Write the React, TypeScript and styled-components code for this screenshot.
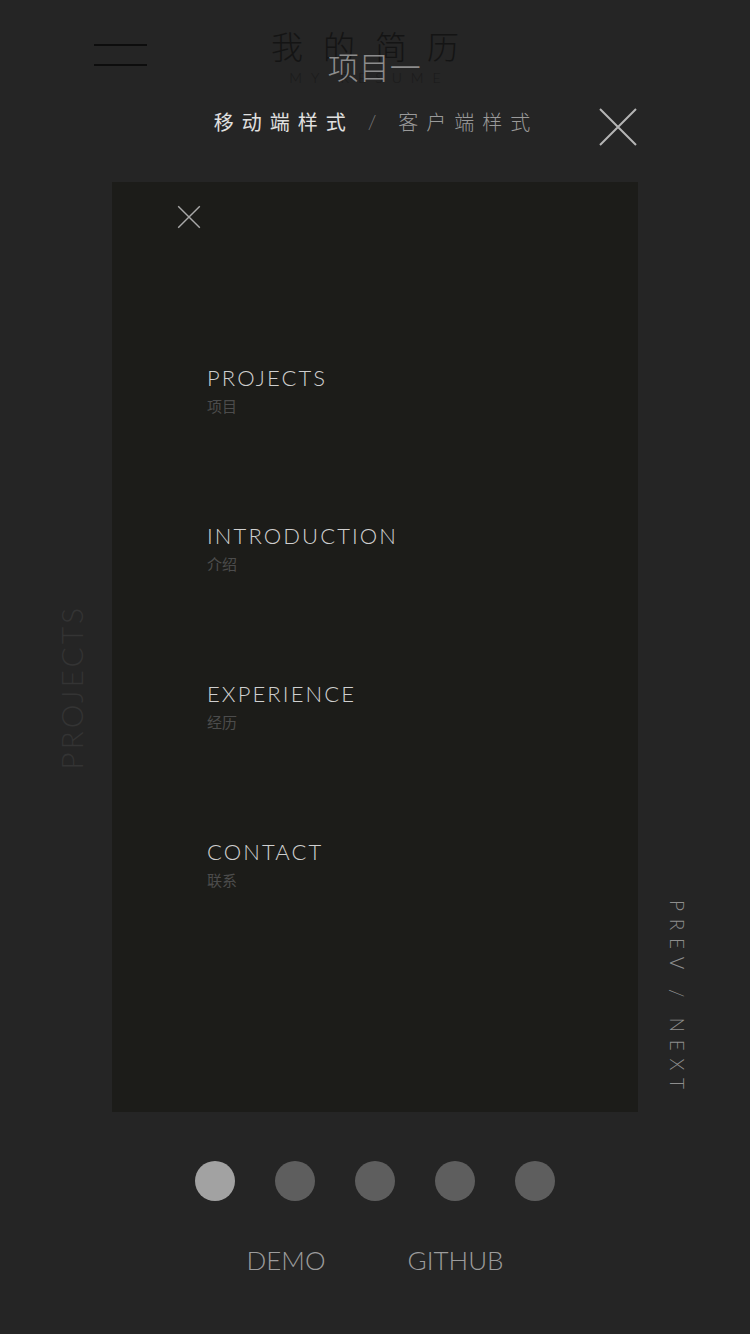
import React from 'react';
import styled, { createGlobalStyle } from 'styled-components';

const GlobalStyle = createGlobalStyle`
    html, body {
        margin: 0;
        padding: 0;
        background: #252525;
    }
    * {
        box-sizing: border-box;
    }
`;

const menuItems = [
    { en: 'PROJECTS', zh: '项目' },
    { en: 'INTRODUCTION', zh: '介绍' },
    { en: 'EXPERIENCE', zh: '经历' },
    { en: 'CONTACT', zh: '联系' },
];

const dots = [true, false, false, false, false];

function CrossIcon({ size, color, width }: { size: number; color: string; width: number }) {
    return (
        <svg width={size} height={size} viewBox="0 0 40 40">
            <path d="M2 2 L38 38 M38 2 L2 38" stroke={color} strokeWidth={width} fill="none" />
        </svg>
    );
}

function App() {
    return (
        <Page>
            <GlobalStyle />
            <Header>
                <Hamburger>
                    <span />
                    <span />
                </Hamburger>
                <TitleBlock>
                    <Title>我的简历</Title>
                    <SubTitle>MY RESUME</SubTitle>
                    <ProjectName>项目一</ProjectName>
                </TitleBlock>
            </Header>

            <Switcher>
                <SwitchText active>移动端样式</SwitchText>
                <Slash>/</Slash>
                <SwitchText>客户端样式</SwitchText>
                <CloseButton>
                    <CrossIcon size={40} color="#b5b5b5" width={2} />
                </CloseButton>
            </Switcher>

            <Stage>
                <SideLabel>PROJECTS</SideLabel>
                <Panel>
                    <SmallClose>
                        <CrossIcon size={24} color="#a8a8a8" width={2.4} />
                    </SmallClose>
                    <Menu>
                        {menuItems.map(item => (
                            <MenuItem key={item.en}>
                                <MenuEn>{item.en}</MenuEn>
                                <MenuZh>{item.zh}</MenuZh>
                            </MenuItem>
                        ))}
                    </Menu>
                </Panel>
                <PrevNext>PREV / NEXT</PrevNext>
            </Stage>

            <Dots>
                {dots.map((on, i) => (
                    <Dot key={i} active={on} />
                ))}
            </Dots>

            <Links>
                <LinkText>DEMO</LinkText>
                <LinkText>GITHUB</LinkText>
            </Links>
        </Page>
    );
}

const Page = styled.div`
    width: 750px;
    height: 1334px;
    background: #252525;
    overflow: hidden;
    font-family: Lato, "Open Sans", "Noto Sans CJK SC", sans-serif;
`;

const Header = styled.div`
    position: relative;
    height: 100px;
    display: flex;
    justify-content: center;
    padding-top: 26px;
`;

const Hamburger = styled.div`
    position: absolute;
    left: 94px;
    top: 44px;
    width: 53px;
    display: flex;
    flex-direction: column;
    gap: 18px;

    span {
        display: block;
        height: 2px;
        background: #0d0d0d;
    }
`;

const TitleBlock = styled.div`
    position: relative;
    display: flex;
    flex-direction: column;
    align-items: center;
    margin-left: -20px;
`;

const Title = styled.div`
    font-family: "Noto Sans CJK SC", sans-serif;
    font-weight: 300;
    font-size: 32px;
    line-height: 38px;
    letter-spacing: 20px;
    margin-right: -20px;
    color: #141414;
`;

const SubTitle = styled.div`
    font-family: Lato, sans-serif;
    font-weight: 300;
    font-size: 14px;
    line-height: 16px;
    letter-spacing: 9px;
    margin-right: -9px;
    margin-top: 6px;
    color: #1a1a1a;
`;

const ProjectName = styled.div`
    position: absolute;
    top: 22px;
    left: 50%;
    transform: translateX(-40%);
    white-space: nowrap;
    font-family: "Noto Sans CJK SC", sans-serif;
    font-weight: 300;
    font-size: 31px;
    line-height: 36px;
    color: #8c8c8c;
`;

const Switcher = styled.div`
    position: relative;
    height: 42px;
    display: flex;
    justify-content: center;
    align-items: center;
    padding-left: 2px;
`;

const SwitchText = styled.span<{ active?: boolean }>`
    font-family: "Noto Sans CJK SC", sans-serif;
    font-weight: ${p => (p.active ? 400 : 300)};
    font-size: 20px;
    letter-spacing: 8px;
    color: ${p => (p.active ? '#e0e0e0' : '#9a9a9a')};
`;

const Slash = styled.span`
    font-family: Lato, sans-serif;
    font-weight: 300;
    font-size: 20px;
    color: #777;
    margin: 0 22px 0 14px;
`;

const CloseButton = styled.div`
    position: absolute;
    right: 112px;
    top: 7px;
    width: 40px;
    height: 40px;
`;

const Stage = styled.div`
    display: grid;
    grid-template-columns: 112px 526px 112px;
    margin-top: 40px;
`;

const SideLabel = styled.div`
    writing-mode: vertical-rl;
    transform: rotate(180deg);
    justify-self: end;
    margin-right: 23px;
    margin-top: 423px;
    align-self: start;
    font-family: Lato, sans-serif;
    font-weight: 300;
    font-size: 30px;
    letter-spacing: 3px;
    color: #343434;
`;

const Panel = styled.div`
    position: relative;
    height: 930px;
    background: #1c1c19;
`;

const SmallClose = styled.div`
    position: absolute;
    left: 65px;
    top: 23px;
    width: 24px;
    height: 24px;
`;

const Menu = styled.div`
    display: flex;
    flex-direction: column;
    gap: 107px;
    padding: 182px 0 0 95px;
`;

const MenuItem = styled.div`
    display: flex;
    flex-direction: column;
`;

const MenuEn = styled.div`
    font-family: Lato, sans-serif;
    font-weight: 300;
    font-size: 22px;
    line-height: 28px;
    letter-spacing: 2.1px;
    color: #cfcfcf;
`;

const MenuZh = styled.div`
    font-family: "Noto Sans CJK SC", sans-serif;
    font-size: 15px;
    line-height: 18px;
    margin-top: 5px;
    color: #4c4c4c;
`;

const PrevNext = styled.div`
    writing-mode: vertical-rl;
    justify-self: start;
    align-self: start;
    margin-left: 28px;
    margin-top: 718px;
    font-family: Lato, sans-serif;
    font-weight: 300;
    font-size: 19px;
    letter-spacing: 7.7px;
    color: #8e8e8e;
`;

const Dots = styled.div`
    display: flex;
    justify-content: center;
    gap: 40px;
    margin-top: 49px;
`;

const Dot = styled.div<{ active: boolean }>`
    width: 40px;
    height: 40px;
    border-radius: 50%;
    background: ${p => (p.active ? '#a2a2a2' : '#5e5e5e')};
`;

const Links = styled.div`
    display: flex;
    justify-content: center;
    gap: 82px;
    margin-top: 43px;
`;

const LinkText = styled.span`
    font-family: Lato, sans-serif;
    font-weight: 300;
    font-size: 26px;
    color: #9c9c9c;
`;

export default App;
